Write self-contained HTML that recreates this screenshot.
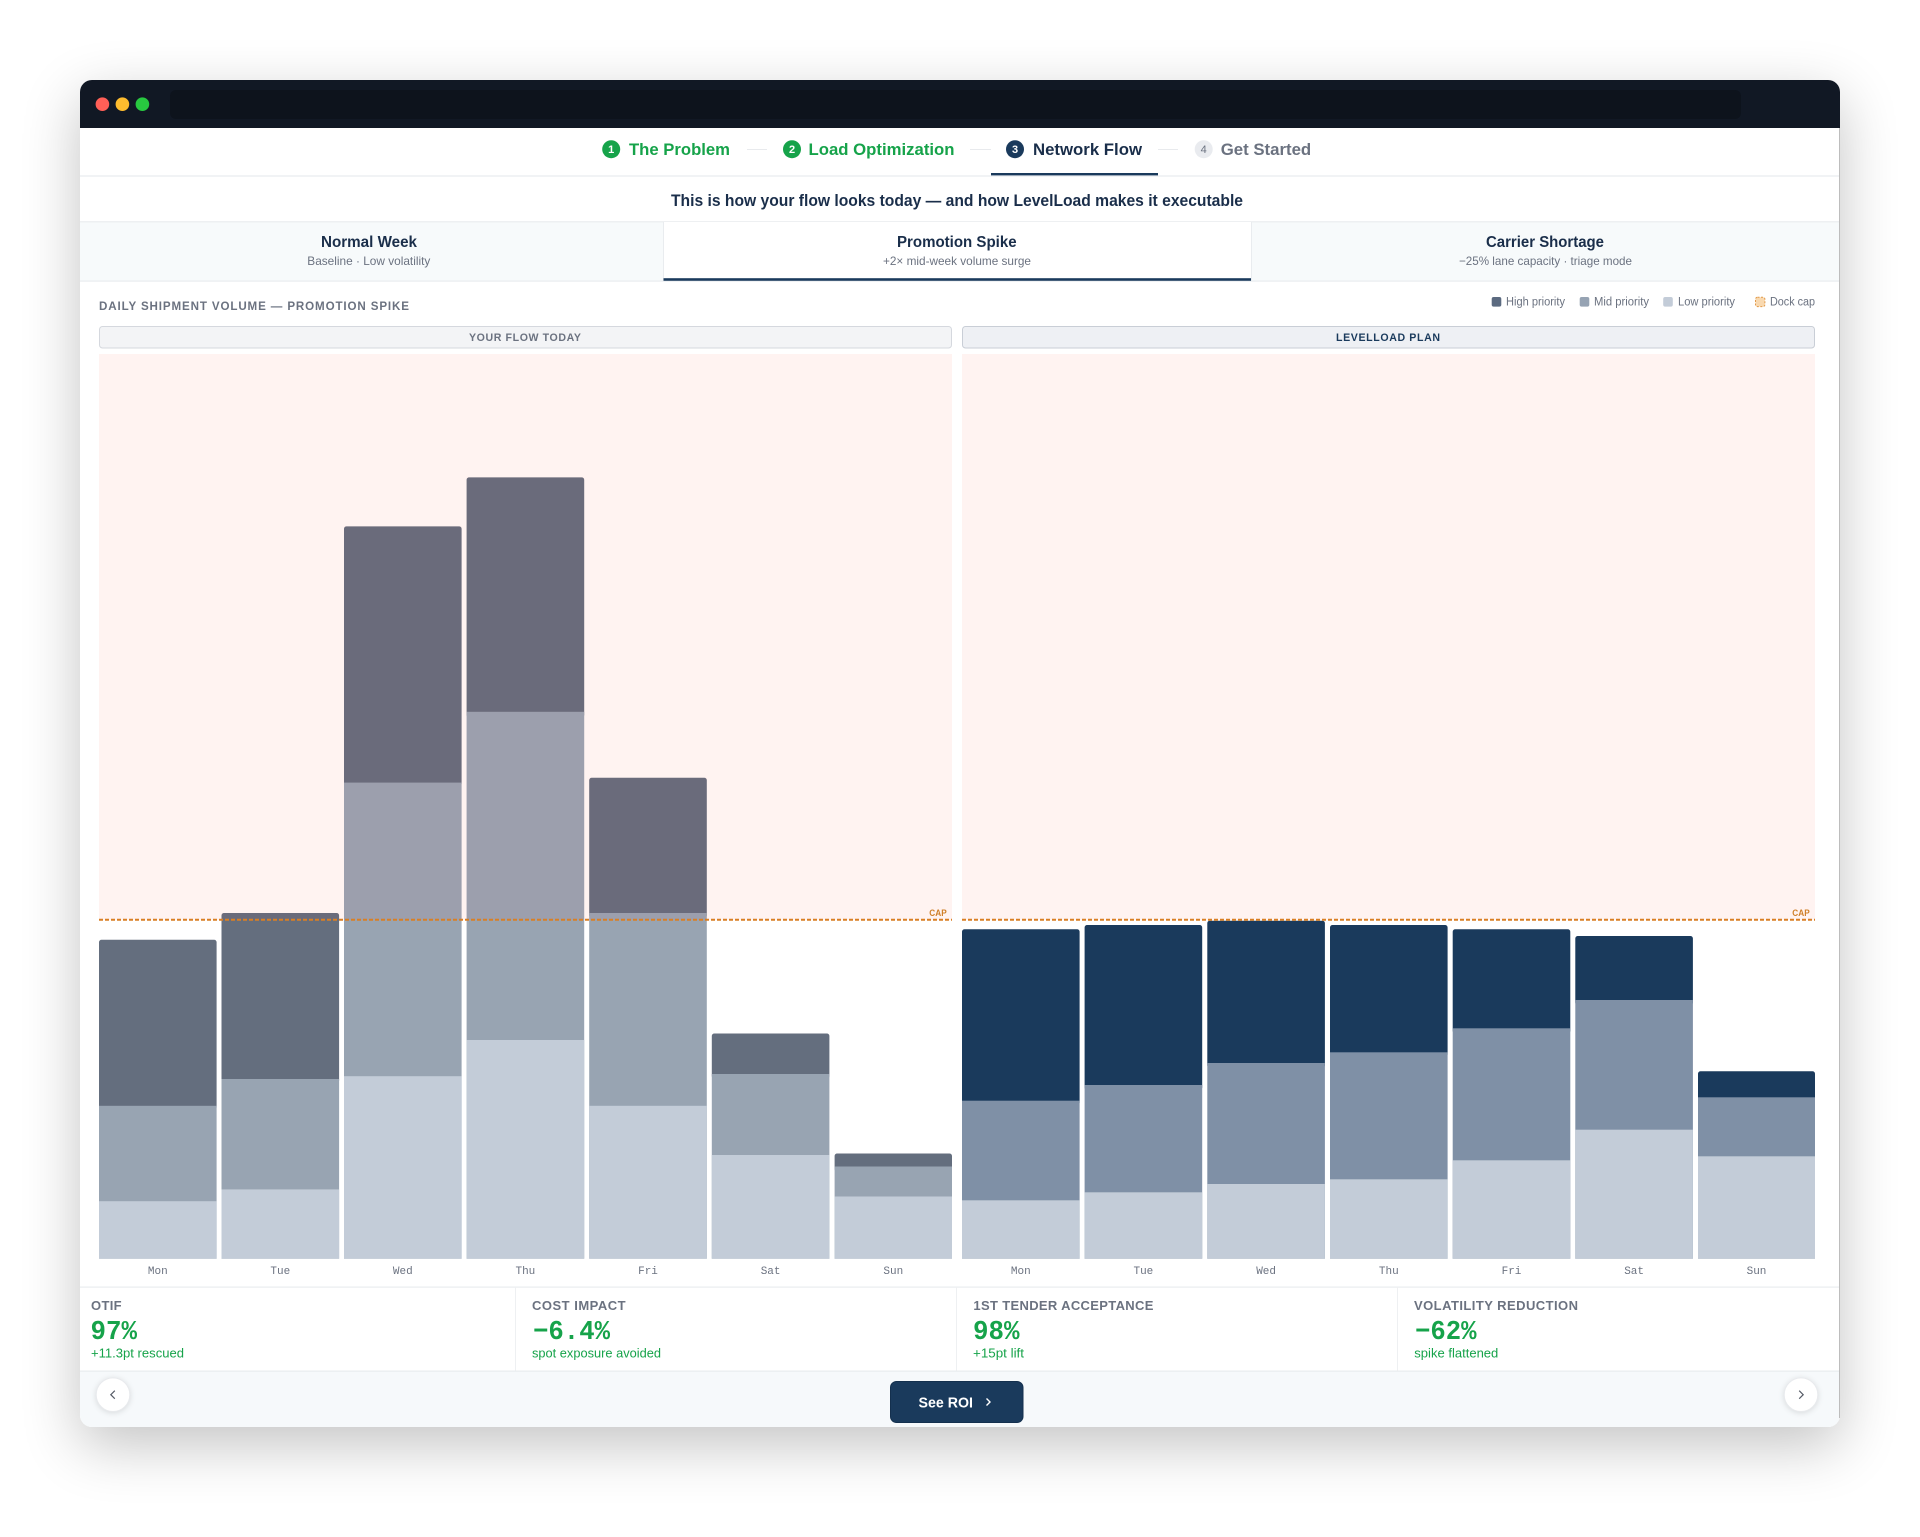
<!DOCTYPE html>
<html lang="en"><head><meta charset="utf-8"><title>Network Flow</title>
<style>
html,body{margin:0;padding:0;background:#fff;width:1920px;height:1537px;overflow:hidden}
#win{position:absolute;left:80px;top:80px;width:1760px;height:1347px;border-radius:12px;box-shadow:0 18px 58px rgba(0,0,0,.24)}
svg{position:absolute;left:0;top:0}
text{font-family:"Liberation Sans",Arial,sans-serif}
.b{font-weight:700}
.nv{fill:#1a2e4a}
.gn{fill:#16a34a}
.gy{fill:#6b7280}
.d{font-family:"Liberation Mono",monospace;font-size:11px;fill:#6b7280;text-anchor:middle}
.lg{font-size:11.5px;fill:#6b7280}
.ml{font-size:13px;font-weight:700;fill:#6b7280}
.mv{font-family:"Liberation Mono",monospace;font-size:27px;font-weight:700;fill:#16a34a}
.ms{font-size:12.5px;fill:#16a34a}
.n{font-size:11px;font-weight:700;fill:#fff;text-anchor:middle}
</style></head><body>
<div id="win"></div>
<svg width="1920" height="1537" viewBox="0 0 1920 1537" xmlns="http://www.w3.org/2000/svg">
<defs><clipPath id="w"><rect x="80" y="80" width="1760" height="1347" rx="12"/></clipPath></defs>
<g clip-path="url(#w)">
<rect x="80" y="80" width="1760" height="1347" fill="#fff"/>
<rect x="80" y="80" width="1760" height="48" fill="#111824"/>
<rect x="170" y="90" width="1571" height="29" rx="6" fill="#0d131c"/>
<circle cx="102.4" cy="104.2" r="6.8" fill="#ff5f57"/><circle cx="122.4" cy="104.2" r="6.8" fill="#febc2e"/><circle cx="142.4" cy="104.2" r="6.8" fill="#28c840"/>

<!-- stepper -->
<rect x="80" y="175" width="1760" height="2" fill="#f1f3f5"/>
<circle cx="611.2" cy="149.2" r="9" fill="#16a34a"/><text class="n" x="611.2" y="153.2">1</text>
<text class="b gn" x="629" y="155" font-size="17" textLength="101" lengthAdjust="spacingAndGlyphs">The Problem</text>
<rect x="747" y="149" width="20" height="1" fill="#e8eaed"/>
<circle cx="792" cy="149.2" r="9" fill="#16a34a"/><text class="n" x="792" y="153.2">2</text>
<text class="b gn" x="808.5" y="155" font-size="17" textLength="146" lengthAdjust="spacingAndGlyphs">Load Optimization</text>
<rect x="970" y="149" width="21" height="1" fill="#e8eaed"/>
<circle cx="1015" cy="149.2" r="9" fill="#1a3a5c"/><text class="n" x="1015" y="153.2">3</text>
<text class="b nv" x="1033" y="155" font-size="17" textLength="109" lengthAdjust="spacingAndGlyphs">Network Flow</text>
<rect x="991" y="173" width="167" height="2.4" fill="#1a3a5c"/>
<rect x="1158" y="149" width="20" height="1" fill="#e8eaed"/>
<circle cx="1203.7" cy="149.2" r="9" fill="#e9ebef"/><text x="1203.7" y="153.2" font-size="11" fill="#6b7280" text-anchor="middle">4</text>
<text class="gy" x="1220.7" y="155" font-size="17" font-weight="700" textLength="90.5" lengthAdjust="spacingAndGlyphs">Get Started</text>

<!-- subtitle -->
<text class="b nv" x="671" y="206" font-size="17" textLength="572" lengthAdjust="spacingAndGlyphs">This is how your flow looks today — and how LevelLoad makes it executable</text>

<!-- scenario tabs -->
<rect x="80" y="222" width="1760" height="59" fill="#f7fafb"/>
<rect x="80" y="221" width="1760" height="1.5" fill="#eef0f2"/>
<rect x="80" y="280.5" width="1760" height="1.2" fill="#e9ecef"/>
<rect x="663.5" y="222" width="587.5" height="59" fill="#fff"/>
<rect x="663" y="222" width="1" height="59" fill="#e9ecef"/><rect x="1251" y="222" width="1" height="59" fill="#e9ecef"/>
<rect x="663.5" y="278.2" width="587.5" height="2.6" fill="#1a3a5c"/>
<text class="b nv" x="321" y="247" font-size="15.5" textLength="96" lengthAdjust="spacingAndGlyphs">Normal Week</text>
<text class="gy" x="307.3" y="265" font-size="12" textLength="123" lengthAdjust="spacingAndGlyphs">Baseline · Low volatility</text>
<text class="b nv" x="897" y="247" font-size="15.5" textLength="119.6" lengthAdjust="spacingAndGlyphs">Promotion Spike</text>
<text class="gy" x="883" y="265" font-size="12" textLength="148" lengthAdjust="spacingAndGlyphs">+2× mid-week volume surge</text>
<text class="b nv" x="1486" y="247" font-size="15.5" textLength="118" lengthAdjust="spacingAndGlyphs">Carrier Shortage</text>
<text class="gy" x="1459" y="265" font-size="12" textLength="173" lengthAdjust="spacingAndGlyphs">−25% lane capacity · triage mode</text>

<!-- section head + legend -->
<text class="b gy" x="99" y="310" font-size="11.6" textLength="310">DAILY SHIPMENT VOLUME — PROMOTION SPIKE</text>
<rect x="1491.7" y="297" width="9.6" height="9.6" rx="2" fill="#5b6a80"/><text class="lg" x="1506" y="305.6" textLength="59" lengthAdjust="spacingAndGlyphs">High priority</text>
<rect x="1579.7" y="297" width="9.6" height="9.6" rx="2" fill="#96a3b3"/><text class="lg" x="1594" y="305.6" textLength="55" lengthAdjust="spacingAndGlyphs">Mid priority</text>
<rect x="1663.2" y="297" width="9.6" height="9.6" rx="2" fill="#c3ccd8"/><text class="lg" x="1678" y="305.6" textLength="57" lengthAdjust="spacingAndGlyphs">Low priority</text>
<rect x="1755.5" y="297.2" width="9.4" height="9.4" rx="2" fill="#f9d9b0" stroke="#e19a4a" stroke-width="1" stroke-dasharray="2 1.5"/><text class="lg" x="1770" y="305.6" textLength="45" lengthAdjust="spacingAndGlyphs">Dock cap</text>

<!-- panel headers -->
<rect x="99.5" y="326.5" width="852" height="21.5" rx="3" fill="#f3f4f6" stroke="#d5d8de"/>
<text class="b gy" x="469" y="341" font-size="10.6" textLength="112">YOUR FLOW TODAY</text>
<rect x="962.5" y="326.5" width="852" height="21.5" rx="3" fill="#eef0f4" stroke="#c9ced6"/>
<text class="b" fill="#1a3a5c" x="1336" y="341" font-size="10.6" textLength="104">LEVELLOAD PLAN</text>

<!-- over-capacity zone -->
<rect x="99" y="354" width="853" height="565.7" fill="#fff3f1"/>
<rect x="962" y="354" width="853" height="565.7" fill="#fff3f1"/>

<!-- left bars -->
<g>
<rect x="99" y="939.8" width="117.6" height="170" rx="2.5" fill="#646e7e"/><rect x="99" y="1105.8" width="117.6" height="152.9" fill="#98a4b2"/><rect x="99" y="1201.2" width="117.6" height="57.5" fill="#c3ccd8"/>
<rect x="221.5" y="913" width="117.6" height="170" rx="2.5" fill="#646e7e"/><rect x="221.5" y="1079" width="117.6" height="179.7" fill="#98a4b2"/><rect x="221.5" y="1189.4" width="117.6" height="69.3" fill="#c3ccd8"/>
<rect x="344" y="526.4" width="117.6" height="260" rx="2.5" fill="#646e7e"/><rect x="344" y="782.6" width="117.6" height="476.1" fill="#98a4b2"/><rect x="344" y="1076.2" width="117.6" height="182.5" fill="#c3ccd8"/>
<rect x="466.6" y="477.4" width="117.6" height="240" rx="2.5" fill="#646e7e"/><rect x="466.6" y="711.8" width="117.6" height="546.9" fill="#98a4b2"/><rect x="466.6" y="1040" width="117.6" height="218.7" fill="#c3ccd8"/>
<rect x="589.2" y="777.8" width="117.6" height="140" rx="2.5" fill="#646e7e"/><rect x="589.2" y="913" width="117.6" height="345.7" fill="#98a4b2"/><rect x="589.2" y="1105.8" width="117.6" height="152.9" fill="#c3ccd8"/>
<rect x="711.8" y="1033.5" width="117.6" height="45" rx="2.5" fill="#646e7e"/><rect x="711.8" y="1074" width="117.6" height="184.7" fill="#98a4b2"/><rect x="711.8" y="1155" width="117.6" height="103.7" fill="#c3ccd8"/>
<rect x="834.6" y="1153.5" width="117.4" height="18" rx="2.5" fill="#646e7e"/><rect x="834.6" y="1166.5" width="117.4" height="92.2" fill="#98a4b2"/><rect x="834.6" y="1196.5" width="117.4" height="62.2" fill="#c3ccd8"/>
</g>
<!-- tint on bar portions above cap -->
<g fill="#ff3c28" fill-opacity=".04">
<rect x="221.5" y="913" width="117.6" height="6.7"/>
<rect x="344" y="526.4" width="117.6" height="393.3"/>
<rect x="466.6" y="477.4" width="117.6" height="442.3"/>
<rect x="589.2" y="777.8" width="117.6" height="141.9"/>
</g>
<!-- right bars -->
<g>
<rect x="962" y="929.3" width="117.6" height="176" rx="2.5" fill="#1a3a5c"/><rect x="962" y="1100.7" width="117.6" height="158" fill="#7f90a6"/><rect x="962" y="1200.3" width="117.6" height="58.4" fill="#c3ccd8"/>
<rect x="1084.6" y="925" width="117.6" height="165" rx="2.5" fill="#1a3a5c"/><rect x="1084.6" y="1085" width="117.6" height="173.7" fill="#7f90a6"/><rect x="1084.6" y="1192.3" width="117.6" height="66.4" fill="#c3ccd8"/>
<rect x="1207.3" y="920.7" width="117.6" height="147" rx="2.5" fill="#1a3a5c"/><rect x="1207.3" y="1063" width="117.6" height="195.7" fill="#7f90a6"/><rect x="1207.3" y="1184" width="117.6" height="74.7" fill="#c3ccd8"/>
<rect x="1330" y="925" width="117.6" height="132" rx="2.5" fill="#1a3a5c"/><rect x="1330" y="1052.3" width="117.6" height="206.4" fill="#7f90a6"/><rect x="1330" y="1179.3" width="117.6" height="79.4" fill="#c3ccd8"/>
<rect x="1452.7" y="929.3" width="117.6" height="104" rx="2.5" fill="#1a3a5c"/><rect x="1452.7" y="1028.3" width="117.6" height="230.4" fill="#7f90a6"/><rect x="1452.7" y="1160.3" width="117.6" height="98.4" fill="#c3ccd8"/>
<rect x="1575.3" y="936" width="117.6" height="69" rx="2.5" fill="#1a3a5c"/><rect x="1575.3" y="1000" width="117.6" height="258.7" fill="#7f90a6"/><rect x="1575.3" y="1129.7" width="117.6" height="129" fill="#c3ccd8"/>
<rect x="1698" y="1071.3" width="117" height="31" rx="2.5" fill="#1a3a5c"/><rect x="1698" y="1097.3" width="117" height="161.4" fill="#7f90a6"/><rect x="1698" y="1156.3" width="117" height="102.4" fill="#c3ccd8"/>
</g>
<path d="M99 919.7H952M962 919.7H1815" stroke="#d97f24" stroke-width="2" stroke-dasharray="4 2" fill="none"/>
<text class="b" x="929.3" y="916" font-size="9.6" fill="#cf7f28" textLength="17.4" lengthAdjust="spacingAndGlyphs">CAP</text>
<text class="b" x="1792.3" y="916" font-size="9.6" fill="#cf7f28" textLength="17.4" lengthAdjust="spacingAndGlyphs">CAP</text>

<!-- day labels -->
<text class="d" x="157.8" y="1274">Mon</text><text class="d" x="280.3" y="1274">Tue</text><text class="d" x="402.8" y="1274">Wed</text><text class="d" x="525.4" y="1274">Thu</text><text class="d" x="648" y="1274">Fri</text><text class="d" x="770.6" y="1274">Sat</text><text class="d" x="893.3" y="1274">Sun</text>
<text class="d" x="1020.8" y="1274">Mon</text><text class="d" x="1143.4" y="1274">Tue</text><text class="d" x="1266.1" y="1274">Wed</text><text class="d" x="1388.8" y="1274">Thu</text><text class="d" x="1511.5" y="1274">Fri</text><text class="d" x="1634.1" y="1274">Sat</text><text class="d" x="1756.5" y="1274">Sun</text>

<!-- metrics -->
<rect x="80" y="1286.5" width="1760" height="1.2" fill="#e9ecef"/>
<rect x="515" y="1287" width="1" height="84" fill="#eef0f2"/><rect x="956" y="1287" width="1" height="84" fill="#eef0f2"/><rect x="1397" y="1287" width="1" height="84" fill="#eef0f2"/>
<text class="ml" x="91" y="1310" textLength="30.6">OTIF</text>
<text class="mv" x="90.5" y="1339" textLength="46.5" lengthAdjust="spacingAndGlyphs">97%</text>
<text class="ms" x="91" y="1357.3" textLength="93" lengthAdjust="spacingAndGlyphs">+11.3pt rescued</text>
<text class="ml" x="532" y="1310" textLength="93.6">COST IMPACT</text>
<text class="mv" x="533" y="1339" textLength="77" lengthAdjust="spacingAndGlyphs">−6.4%</text>
<text class="ms" x="532" y="1357.3" textLength="129" lengthAdjust="spacingAndGlyphs">spot exposure avoided</text>
<text class="ml" x="973.4" y="1310" textLength="180">1ST TENDER ACCEPTANCE</text>
<text class="mv" x="973" y="1339" textLength="46.5" lengthAdjust="spacingAndGlyphs">98%</text>
<text class="ms" x="973" y="1357.3" textLength="51" lengthAdjust="spacingAndGlyphs">+15pt lift</text>
<text class="ml" x="1414" y="1310" textLength="164">VOLATILITY REDUCTION</text>
<text class="mv" x="1415" y="1339" textLength="61.5" lengthAdjust="spacingAndGlyphs">−62%</text>
<text class="ms" x="1414.3" y="1357.3" textLength="84" lengthAdjust="spacingAndGlyphs">spike flattened</text>

<!-- footer -->
<rect x="80" y="1371" width="1760" height="56" fill="#f6f9fb"/>
<rect x="80" y="1370.5" width="1760" height="1.2" fill="#e9ecef"/>
</g>
<rect x="1839" y="128" width="1" height="1290" fill="#bdbdbd"/>
<g style="filter:drop-shadow(0 1px 3px rgba(0,0,0,.12))">
<circle cx="113" cy="1394.7" r="16.8" fill="#fff" stroke="#e8eaed"/>
<circle cx="1801" cy="1394.7" r="16.8" fill="#fff" stroke="#e8eaed"/>
</g>
<path d="M114.8 1390.7L110.8 1394.7L114.8 1398.7" fill="none" stroke="#555b66" stroke-width="1.2"/>
<path d="M1799.2 1390.7L1803.2 1394.7L1799.2 1398.7" fill="none" stroke="#555b66" stroke-width="1.2"/>
<rect x="890.5" y="1381.5" width="132.5" height="41" rx="6" fill="#1a3a5c" stroke="#14304e"/>
<text class="b" x="918.5" y="1407.5" font-size="15" fill="#fff" textLength="54.5" lengthAdjust="spacingAndGlyphs">See ROI</text>
<path d="M986.5 1398.5L990 1402L986.5 1405.5" fill="none" stroke="#fff" stroke-width="1.4"/>
</svg>
</body></html>
